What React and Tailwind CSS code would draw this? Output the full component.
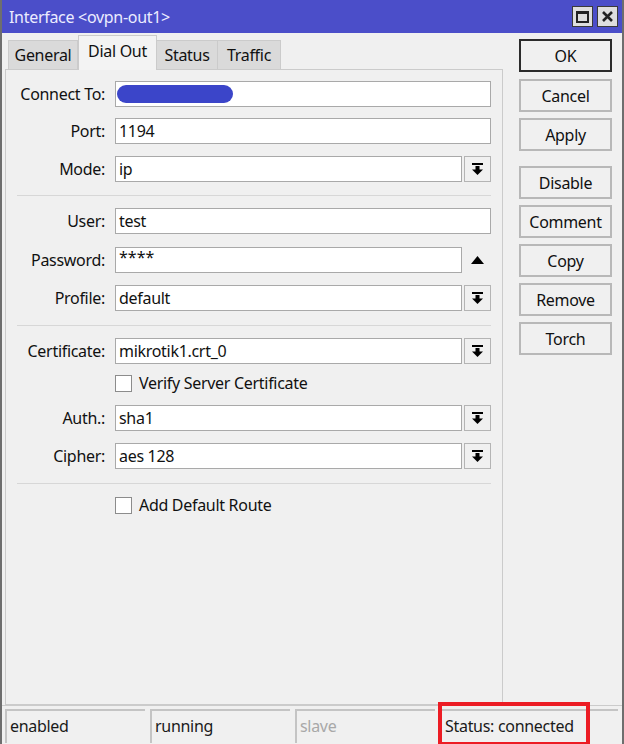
import React from "react";

function DropIcon() {
  return (
    <svg width="11" height="12" viewBox="0 0 11 12">
      <rect x="0" y="0" width="11" height="2" fill="#000" />
      <rect x="3.5" y="3" width="4" height="4" fill="#000" />
      <polygon points="0,6.5 11,6.5 5.5,12" fill="#000" />
    </svg>
  );
}

function Field({ label, value, drop, extra, className }) {
  return (
    <div className={"flex items-center h-[26px] " + (className || "")}>
      <div className="w-[100px] text-right pr-[1px] shrink-0">{label}</div>
      <div
        className={
          "ml-[9px] h-[26px] bg-white border border-[#a9a9a9] flex items-center px-[3px] " +
          (drop || extra ? "w-[347px]" : "w-[376px]")
        }
      >
        {value}
      </div>
      {drop && (
        <div className="ml-[2px] w-[27px] h-[26px] border border-[#b4b4b4] bg-[#f0f0f0] flex items-center justify-center">
          <DropIcon />
        </div>
      )}
      {extra && (
        <div className="ml-[2px] w-[27px] h-[26px] flex items-center justify-center">
          <svg width="13" height="8" viewBox="0 0 13 8">
            <polygon points="0,8 13,8 6.5,0" fill="#000" />
          </svg>
        </div>
      )}
    </div>
  );
}

function Check({ label, className }) {
  return (
    <div className={"flex items-center h-[22px] pl-[109px] " + (className || "")}>
      <div className="w-[17px] h-[17px] bg-white border border-[#8c8c8c]" />
      <span className="ml-[7px]">{label}</span>
    </div>
  );
}

function Sep({ className }) {
  return <div className={"ml-[11px] mr-[11px] h-[2px] border-t border-[#d7d7d7] " + (className || "")} />;
}

function Btn({ children, primary, className }) {
  return (
    <div
      className={
        "w-[93px] h-[33px] flex items-center justify-center bg-[#f0f0f0] " +
        (primary ? "border-2 border-[#2b2b2b] " : "border-2 border-[#b8b8b8] ") +
        (className || "")
      }
    >
      {children}
    </div>
  );
}

function Cell({ children, w, dim }) {
  return (
    <div
      className={
        "h-[34px] flex items-center pl-[3px] pb-[2px] border-l-2 border-t-2 border-[#c4c4c4] " +
        w +
        (dim ? " text-[#a8a8a8]" : " text-[#1a1a1a]")
      }
    >
      {children}
    </div>
  );
}

export default function App() {
  return (
    <div className="relative w-[624px] h-[744px] bg-[#f0f0f0] flex flex-col border-l-2 border-r-2 border-[#6e6e6e] text-[16px] text-[#111] font-['Noto_Sans',sans-serif] tracking-[-0.3px] overflow-hidden">
      <div className="h-[33px] bg-[#4b4ec9] flex items-center justify-between pl-[7px] pr-[4px] shrink-0">
        <span className="text-[#ececff] text-[16px]">Interface &lt;ovpn-out1&gt;</span>
        <div className="flex gap-[4px]">
          <div className="w-[21px] h-[21px] bg-[#dedede] border border-[#3a3a3a] flex items-center justify-center">
            <div className="w-[13px] h-[12px] border-2 border-[#222] border-t-[3px]" />
          </div>
          <div className="w-[21px] h-[21px] bg-[#dedede] border border-[#3a3a3a] flex items-center justify-center">
            <svg width="11" height="11" viewBox="0 0 11 11">
              <path d="M1 1 L10 10 M10 1 L1 10" stroke="#222" strokeWidth="2.6" />
            </svg>
          </div>
        </div>
      </div>

      <div className="flex flex-1 min-h-0">
        <div className="flex flex-col pl-[3px] w-[501px] shrink-0">
          <div className="h-[36px] flex items-end pl-[3px] shrink-0">
            <div className="h-[29px] w-[70px] bg-[#dadada] border border-[#cbcbcb] border-b-0 flex items-center justify-center">General</div>
            <div className="h-[35px] w-[79px] bg-[#f3f3f3] border border-[#cbcbcb] border-b-0 flex items-start pt-[3px] justify-center -mb-[1px] relative z-10">Dial Out</div>
            <div className="h-[29px] w-[61px] bg-[#dadada] border border-[#cbcbcb] border-b-0 border-l-0 flex items-center justify-center">Status</div>
            <div className="h-[29px] w-[63px] bg-[#dadada] border border-[#cbcbcb] border-b-0 border-l-0 flex items-center justify-center">Traffic</div>
          </div>
          <div className="flex-1 border border-[#cbcbcb] bg-[#f0f0f0] flex flex-col pt-[11px]">
            <Field label="Connect To:" value={<div className="w-[116px] h-[18px] rounded-full bg-[#3b45c9] -ml-[2px]" />} />
            <Field label="Port:" value="1194" className="mt-[11px]" />
            <Field label="Mode:" value="ip" drop className="mt-[12px]" />
            <Sep className="mt-[13px]" />
            <Field label="User:" value="test" className="mt-[11px]" />
            <Field label="Password:" value={<span className="-mt-[6px] tracking-[0px]">****</span>} extra className="mt-[13px]" />
            <Field label="Profile:" value="default" drop className="mt-[12px]" />
            <Sep className="mt-[14px]" />
            <Field label="Certificate:" value="mikrotik1.crt_0" drop className="mt-[11px]" />
            <Check label="Verify Server Certificate" className="mt-[8px]" />
            <Field label="Auth.:" value="sha1" drop className="mt-[11px]" />
            <Field label="Cipher:" value="aes 128" drop className="mt-[12px]" />
            <Sep className="mt-[14px]" />
            <Check label="Add Default Route" className="mt-[9px]" />
          </div>
        </div>
        <div className="flex-1 pl-[16px] pt-[6px] flex flex-col">
          <Btn primary>OK</Btn>
          <Btn className="mt-[7px]">Cancel</Btn>
          <Btn className="mt-[6px]">Apply</Btn>
          <Btn className="mt-[15px]">Disable</Btn>
          <Btn className="mt-[6px]">Comment</Btn>
          <Btn className="mt-[6px]">Copy</Btn>
          <Btn className="mt-[6px]">Remove</Btn>
          <Btn className="mt-[6px]">Torch</Btn>
        </div>
      </div>

      <div className="h-[39px] shrink-0 flex items-start gap-[5px] pl-[3px] pt-[3px] border-t border-[#cbcbcb]">
        <Cell w="w-[140px]">enabled</Cell>
        <Cell w="w-[140px]">running</Cell>
        <Cell w="w-[140px]" dim>slave</Cell>
        <Cell w="w-[178px]">Status: connected</Cell>
      </div>

      <div className="absolute left-[436px] top-[702px] w-[152px] h-[44px] border-[4px] border-[#ec1c24]" />
    </div>
  );
}
